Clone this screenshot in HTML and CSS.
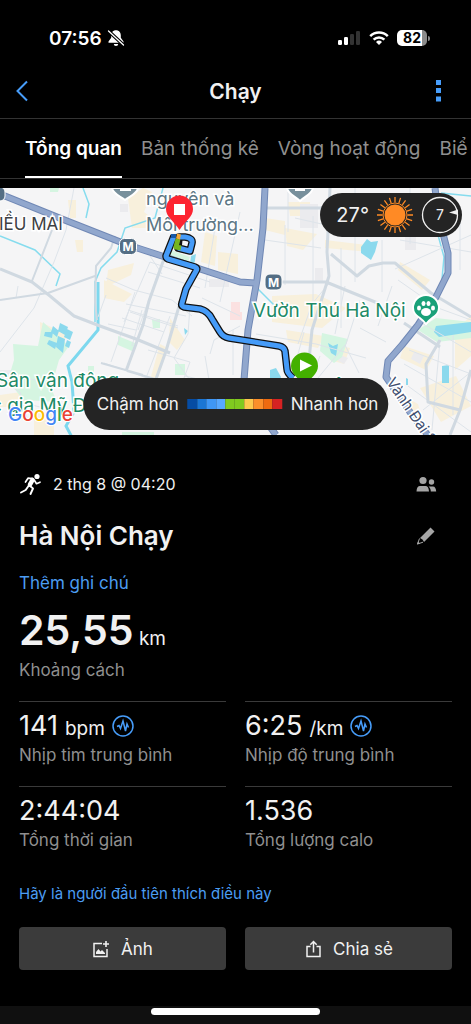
FILE: index.html
```html
<!DOCTYPE html>
<html lang="vi">
<head>
    <meta charset="UTF-8">
    <meta name="viewport" content="width=device-width, initial-scale=1.0">
    <title>Chạy</title>
    <link rel="stylesheet" href="styles.css">
</head>
<body>

<div class="status-bar">
    <div class="status-left">
        <span class="clock">07:56</span>
        <svg width="18" height="18" viewBox="0 0 18 18">
            <path d="M9 1.200c-3 0-4.800 2.300-4.800 5v2.600L1.500 12.600v1.200h15v-1.200l-2.700-3.800V6.200c0-2.700-1.800-5-4.800-5z" fill="#fff"/>
            <path d="M6.800 15h4.400a2.200 2 0 0 1-4.400 0z" fill="#fff"/>
            <path d="M1 1.500L17 16.500" stroke="#000" stroke-width="3.400"/>
            <path d="M1.500 2L16.500 16" stroke="#fff" stroke-width="1.300" stroke-linecap="round"/>
        </svg>
    </div>
    <div class="status-right">
        <svg width="24" height="16" viewBox="0 0 24 16">
            <rect x="1" y="10" width="4" height="5" rx="1.200" fill="#fff"/>
            <rect x="7" y="7" width="4" height="8" rx="1.200" fill="#fff"/>
            <rect x="13" y="4" width="4" height="11" rx="1.200" fill="#333"/>
            <rect x="19" y="1" width="4" height="14" rx="1.200" fill="#333"/>
        </svg>
        <svg width="20" height="16" viewBox="0 0 20 16">
            <g fill="none" stroke="#fff" stroke-width="2.500">
                <path d="M1.200 6.200a12.500 12.500 0 0 1 17.600 0"/>
                <path d="M4.600 9.600a7.700 7.700 0 0 1 10.800 0"/>
            </g>
            <path d="M10 15l-3-3.100a4.300 4.300 0 0 1 6 0z" fill="#fff"/>
        </svg>
        <span class="battery">82</span>
    </div>
</div>

<header class="header">
    <button class="icon-btn" aria-label="Quay lại">
        <svg width="14" height="22" viewBox="0 0 14 22"><path d="M12 1.500L2.500 11l9.500 9.500" fill="none" stroke="#479dfa" stroke-width="2"/></svg>
    </button>
    <h1>Chạy</h1>
    <button class="icon-btn menu" aria-label="Thêm">
        <svg width="14" height="22" viewBox="0 0 14 22"><path d="M5 0h5v5H5zM5 8h5v5H5zM5 16.500h5v5H5z" fill="#479dfa"/></svg>
    </button>
</header>

<nav class="tabs">
    <a class="tab active" href="#">Tổng quan</a>
    <a class="tab" href="#">Bản thống kê</a>
    <a class="tab" href="#">Vòng hoạt động</a>
    <a class="tab" href="#">Biể</a>
</nav>

<section class="map">
    <svg class="map-canvas" viewBox="0 188 471 247" preserveAspectRatio="xMidYMid slice">
        <rect x="0" y="188" width="471" height="247" fill="#f5f5f6"/>

        <!-- built-up areas -->
        <g fill="#f8f0dc">
            <path d="M128 198l15-10 9 4-8 20 8 6-4 10-16 0zM108 270l26-7-3 12-25 12zM104 280l28 14-8 8-20-4zM68 200h8v18h-6zM75 240h8v12h-6zM205 232l12 4-2 30-14-4zM218 252l20 2v20l-20-4z"/>
            <path d="M265 218l20 3v14l-20-5zM285 228l32 6-14 16-16-4zM288 202h22v14h-20zM325 240l50 6-5 6-45-4zM272 296l44-2 30 14-24 20-50-6zM395 200h15v30h-12zM400 262l30 18-8 10-24-20z"/>
            <path d="M40 322l27 12-8 24-18-10zM0 395l28-4v16H0zM34 410l20 4v21H34zM170 318l15 22-8 10-8-8zM160 344l8 4-12 36-6-4zM286 330l38 6-6 12-30-6zM455 330l16-14v40l-16 14zM420 388l36-12 15 30-30 16zM404 346l30 10-8 14-26-12zM396 392l22 12 6 20-20-20zM330 344l20 4-6 16-14-4z"/>
        </g>
        <g fill="#ebebee">
            <path d="M120 204h8v8h-8zM209 279h20v8h-20zM300 204h18v24h-18zM315 268h8v14h-8zM334 206h14v14h-14zM405 234h11v16h-11zM414 352l10 4-4 8-9-5zM340 355l8 3-4 6-6-3zM0 370h12v12H0z"/>
        </g>
        <path d="M231 302h9v12h-9zM230 312h12v8h-12z" fill="#fbe1e1"/>

        <!-- parks and water -->
        <g fill="#d5f5e1">
            <path d="M13 344l25 2 5-24 26 24-10 14-8 28 6 14-34-2-15-20 6-20z"/>
            <path d="M118 336l17 7-3 8-14-6zM152 320l8-1v9h-7zM175 364h10v11h-10zM88 366h6v6h-6zM122 432h32v3h-32zM50 188h9l-1 4h-8zM168 249l22 8-4 10-19-8z"/>
            <path d="M322 333l26 6-6 18-8 6-14-12zM418 330l18-12 35 4v16l-34 4z"/>
        </g>
        <g fill="#8bd9ed">
            <path d="M60 323l8 4-3 8-7-4zM53 326l6 5-2 6-6-5zM45 332l8 0-1 6-8-2zM67 329l6 3-3 8-6-3zM58 336l7 3-2 14-7-6zM49 340l8 3-2 6-8-5zM67 340l4 2-2 6-4-2z"/>
            <path d="M361 247l6-8 4 3 7-1-3 11-4 8-10-7zM270 370l6-2 5 9-3 8h-8zM328 343l5 3 5-2-2 12-5-3zM442 366l7-1v18h-7zM406 378l2 1v6h-2zM184 328l4 3-3 4zM191 256l5-2-2 12-4-2z"/>
            <path d="M436 326l35-4v10l-32 5-5-5z"/>
        </g>
        <g fill="none" stroke="#86dcee" stroke-width="1.500">
            <path d="M83 188l6 16-3 14M0 236l35 14 25 24-4 12M163 188l-8 30-30 10-8 24-16 16-6 14v40M255 286l20 20M441 193l30 3"/>
            <path d="M438 235l6 22-2 22"/>
        </g>
        <path d="M98 282v48l-30 36 4 16 2 30-8 14 8 15" fill="none" stroke="#7dd8ee" stroke-width="3"/>

        <!-- small streets -->
        <g fill="none" stroke="#dee4ea" stroke-width="1">
            <path d="M74 188l-8 42-12 32-20 46-34 44M18 286l-2 12M106 278l28 12 38 10 20 16M106 295l-8 22M104 363l30 10 30 12M135 292l-12 36-12 34M150 256l12 18M150 262l60 20M148 272l52 16M126 304l60 12M122 318l42 14M128 310l50 16M150 262l-26 60M160 268l-22 62M240 212l-20 90M215 228l-10 60M202 298l38 18M190 306l-2 28-14 24 16 22M210 354l4-14 26-14M205 356l4 24M233 330v45"/>
            <path d="M288 192v40M313 216v90M295 218l80 18M265 240l56 8M341 248v80M355 188v94M382 240v52M400 240l71 12M410 188v56M460 210v60M471 235l-76 34M330 282l-18 22-14 40M285 225v60M345 286l-10 48M360 300l-14 44-28 34M256 334l60 10 50 14M304 332l-12 44M320 356l-8 20M345 345l14 28M360 328l26 14M392 286l-14 40M398 280l40 28 33 12M420 322l51 30M409 350l62 24M404 364l67 38M440 340l-8 90M453 335v80M408 386l63 46M471 372l-48 38"/>
            <path d="M130 312l30 10 18 6M108 324l28 6M142 310l-10 36M170 316l-24 62M0 372l44 10M0 380l20 12 8 30M20 402l40 10M185 376l25 6M148 350l42 12-6 16"/>
        </g>

        <!-- secondary roads -->
        <g fill="none" stroke="#d0d9e1" stroke-width="3" stroke-linejoin="round">
            <path d="M0 269l32 13 18 14 24 20 26 10 36 13 34 14"/>
            <path d="M0 300l48-7 47-17M52 230l-20 51M115 236l-4 12-15 18-1 36 2 18" stroke-width="2"/>
            <path d="M165 256l-16 45-6 24-17 46M180 303l-14 48-10 28"/>
            <path d="M101 363l42 12M127 371l28 8" stroke-width="2"/>
            <path d="M265 208h60M330 188l-3 64 2 24-17 54-3 30M272 282h54l54 22M331 254l26 22 12-10 14-3h12l36 30 40 24"/>
            <path d="M404 323l36 24M440 340l-14 24 2 38 32 8 11-40M460 410l-10 25"/>
        </g>

        <!-- highways -->
        <g fill="none" stroke-linejoin="round">
            <g stroke="#7088b5" stroke-width="7">
                <path d="M0 194l62 25 66 26 37 12 32 11 43 14 15 1"/>
                <path d="M265 188l-2 40-6 52-9 50-4 50 8 22 24 33"/>
                <path d="M435 188l4 30 9 35v20l-12 24-18 28-16 20-14 16-2 16 26 38 22 28"/>
            </g>
            <g stroke="#91a7cd" stroke-width="5">
                <path d="M0 194l62 25 66 26 37 12 32 11 43 14 15 1"/>
                <path d="M265 188l-2 40-6 52-9 50-4 50 8 22 24 33"/>
                <path d="M435 188l4 30 9 35v20l-12 24-18 28-16 20-14 16-2 16 26 38 22 28"/>
            </g>
        </g>

        <!-- place names -->
        <g class="place grey">
            <text x="146" y="205">nguyên và</text>
            <text x="146" y="231">Môi trường...</text>
        </g>
        <text class="place district" x="-1" y="230">IỀU MAI</text>
        <g class="place green">
            <text x="253" y="317">Vườn Thú Hà Nội</text>
            <text x="-4" y="387">Sân vận động</text>
            <text x="-9" y="412">c gia Mỹ Đình</text>
            <text x="333" y="392">ô</text>
        </g>
        <text class="place road" transform="translate(386 382) rotate(56)">Vành Đai 2</text>

        <!-- place pins -->
        <g stroke="#fff" stroke-width="2">
            <path d="M112 188c1 6 8 8 13 12 5-4 12-6 13-12z" fill="#78909c"/>
            <path d="M287 188c1 6 8 8 13 13 5-5 12-7 13-13z" fill="#78909c"/>
            <path d="M413 308a13 13 0 1 1 26 0c0 8-8 9-13 16-5-7-13-8-13-16z" fill="#1aa179"/>
        </g>
        <path d="M120 188h11v3h-11zM295 188h10v3h-10z" fill="#fff"/>
        <g fill="#fff">
            <ellipse cx="426" cy="312" rx="5" ry="4"/>
            <ellipse cx="419" cy="308" rx="2" ry="2.500"/>
            <ellipse cx="423.500" cy="303.500" rx="2" ry="2.600"/>
            <ellipse cx="428.500" cy="303.500" rx="2" ry="2.600"/>
            <ellipse cx="433" cy="308" rx="2" ry="2.500"/>
        </g>
        <g fill="#546e84" stroke="#fff" stroke-width="1">
            <rect x="119.500" y="238.500" width="17" height="16" rx="5"/>
            <rect x="265" y="274" width="17" height="16" rx="5"/>
            <rect x="-11" y="187" width="16" height="14" rx="5"/>
        </g>
        <g class="metro">
            <text x="128" y="251">M</text>
            <text x="273.500" y="286.500">M</text>
        </g>

        <!-- route -->
        <g fill="none" stroke-linejoin="round">
            <g stroke="#111" stroke-width="7.500">
                <path d="M174 236l-8 20q0 2 2 3l27 8q3 1 1 4l-10 18-4 14q-1 3 2 4l16 2q8 2 12 10l8 13q3 5 9 6l50 8q5 1 6 5l2 18q0 4 6 9"/>
                <path d="M179 237l6 0q8 1 7 6l-2 8-12-3z"/>
            </g>
            <g stroke="#459bf8" stroke-width="5">
                <path d="M174 236l-8 20q0 2 2 3l27 8q3 1 1 4l-10 18-4 14q-1 3 2 4l16 2q8 2 12 10l8 13q3 5 9 6l50 8q5 1 6 5l2 18q0 4 6 9"/>
                <path d="M179 237l6 0q8 1 7 6l-2 8-12-3"/>
            </g>
            <path d="M178 239l-2 8 5 1" stroke="#76b51f" stroke-width="5"/>
            <path d="M179 234l-1 5" stroke="#f0a83a" stroke-width="4"/>
            <path d="M171 236h5" stroke="#1558a8" stroke-width="4"/>
        </g>
        <path d="M166 209a13.500 13.500 0 0 1 27 0c0 8-7 11-13.500 21-6.500-10-13.500-13-13.500-21z" fill="#fd2431"/>
        <rect x="174" y="204" width="11" height="11" fill="#fff"/>
        <path d="M291 366a13.500 13.500 0 0 1 27 0c0 8-7 11-13.500 21-6.500-10-13.500-13-13.500-21z" fill="#43b000"/>
        <path d="M300 359.500l12 6-12 6z" fill="#fff"/>

        <text class="google" x="8" y="421"><tspan fill="#4285f4">G</tspan><tspan fill="#ea4335">o</tspan><tspan fill="#fbbc05">o</tspan><tspan fill="#4285f4">g</tspan><tspan fill="#34a853">l</tspan><tspan fill="#ea4335">e</tspan></text>
    </svg>

    <div class="weather">
        <span>27°</span>
        <svg width="36" height="36" viewBox="-18 -18 36 36">
            <g stroke="#ff8a25" stroke-width="1.300">
                <path id="ray" d="M0-12.500V-18M0 12.500V18M12.500 0H18M-12.500 0H-18"/>
                <use href="#ray" transform="rotate(18)"/>
                <use href="#ray" transform="rotate(36)"/>
                <use href="#ray" transform="rotate(54)"/>
                <use href="#ray" transform="rotate(72)"/>
            </g>
            <circle r="12" fill="none" stroke="#ff8a25"/>
            <circle r="10.500" fill="#ff8a25"/>
        </svg>
        <svg width="38" height="38" viewBox="-19 -19 38 38">
            <circle r="17.500" fill="none" stroke="#f1f1f1" stroke-width="1.300"/>
            <path d="M9-2.500L18-5.500v5.500z" fill="#f1f1f1"/>
            <text class="wind" x="0" y="5">7</text>
        </svg>
    </div>

    <div class="legend">
        <span>Chậm hơn</span>
        <div class="scale">
            <i class="c1"></i><i class="c2"></i><i class="c3"></i><i class="c4"></i><i class="c5"></i><i class="c5"></i><i class="c6"></i><i class="c7"></i><i class="c8"></i><i class="c9"></i>
        </div>
        <span>Nhanh hơn</span>
    </div>
</section>

<main class="info">
    <div class="row date-row">
        <svg width="24" height="24" viewBox="0 0 24 24">
            <circle cx="18" cy="4.500" r="2.600" fill="#fff"/>
            <g fill="none" stroke="#fff" stroke-linejoin="round" stroke-linecap="round">
                <path d="M13.500 8L11 12.500" stroke-width="4.600"/>
                <path d="M13.500 6.500L9 6.200 6.500 10M15.500 8.500l2 3.200 3.500-1.500" stroke-width="1.700"/>
                <path d="M10.500 13.500l3.500 3-2.500 5.500M9.500 14l-2.800 4-4.700 2.500" stroke-width="1.900"/>
            </g>
        </svg>
        <span class="date">2 thg 8 @ 04:20</span>
        <svg class="end" width="22" height="22" viewBox="0 0 22 22" fill="#a5a5a5">
            <circle cx="8" cy="7.500" r="3.600"/>
            <circle cx="16.500" cy="9" r="2.700"/>
            <path d="M1.500 18.500c.2-3.800 1.500-5.500 3.500-5.500h5.500c2 0 3.300 1.700 3.500 5.500zM13.500 13.500h4.500c2 0 3 2 3.200 5h-5.400c0-2-.7-4-2.300-5z"/>
        </svg>
    </div>
    <div class="row title-row">
        <h2>Hà Nội Chạy</h2>
        <button class="icon-btn end" aria-label="Sửa tên">
            <svg width="22" height="22" viewBox="0 0 22 22" fill="#a5a5a5">
                <path d="M15.500 2.500l4 4L9 17l-1.500-2.500L5 13z"/>
                <path d="M4.500 13.500L2.500 19l5.500-1.800" fill="none" stroke="#a5a5a5"/>
                <path d="M2 19.500l1-3 2 2z"/>
            </svg>
        </button>
    </div>
    <a class="note" href="#">Thêm ghi chú</a>

    <div class="distance"><strong>25,55</strong> km</div>
    <div class="label">Khoảng cách</div>

    <div class="stats">
        <div class="stat">
            <div class="value">141 <small>bpm</small>
                <svg width="22" height="22" viewBox="0 0 22 22" fill="none" stroke="#479dfa"><circle cx="11" cy="11" r="10" stroke-width="1.500"/><path d="M5 11.500l2-1 1.500 3L11 6l2.500 10 1.500-7 1.500 3.500" stroke-width="1.500"/></svg>
            </div>
            <div class="label">Nhịp tim trung bình</div>
        </div>
        <div class="stat">
            <div class="value">6:25 <small>/km</small>
                <svg width="22" height="22" viewBox="0 0 22 22" fill="none" stroke="#479dfa"><circle cx="11" cy="11" r="10" stroke-width="1.500"/><path d="M5 11.500l2-1 1.500 3L11 6l2.500 10 1.500-7 1.500 3.500" stroke-width="1.500"/></svg>
            </div>
            <div class="label">Nhịp độ trung bình</div>
        </div>
        <div class="stat">
            <div class="value">2:44:04</div>
            <div class="label">Tổng thời gian</div>
        </div>
        <div class="stat">
            <div class="value">1.536</div>
            <div class="label">Tổng lượng calo</div>
        </div>
    </div>

    <a class="like" href="#">Hãy là người đầu tiên thích điều này</a>

    <div class="actions">
        <button class="action">
            <svg width="18" height="18" viewBox="0 0 18 18">
                <path d="M10 3.500H2v13h13V9" fill="none" stroke="#f1f1f1" stroke-width="1.500"/>
                <path d="M14 1v6M11 4h6" stroke="#f1f1f1" stroke-width="1.600"/>
                <path d="M4 14v-2l2.500-3 2 2.500 1.500-1.500 3 3v1z" fill="#f1f1f1"/>
            </svg>
            Ảnh
        </button>
        <button class="action">
            <svg width="18" height="18" viewBox="0 0 18 18" fill="none" stroke="#f1f1f1" stroke-width="1.500">
                <path d="M6.500 6.500H3v10h13v-10h-3.500M9.500 12.500V2M6.300 4.800L9.500 1.500l3.200 3.300"/>
            </svg>
            Chia sẻ
        </button>
    </div>
</main>

<div class="home-bar"><div class="handle"></div></div>

</body>
</html>
```
FILE: styles.css
```css
* {
    box-sizing: border-box;
}
body {
    margin: 0;
    min-height: 100vh;
    display: flex;
    flex-direction: column;
    background: #000;
    color: #f1f1f1;
    font-family: Inter, "Liberation Sans", sans-serif;
    font-size: 17px;
    overflow-x: hidden;
}
svg {
    display: block;
    flex: none;
}
a {
    text-decoration: none;
}
.icon-btn {
    display: block;
    padding: 0;
    border: none;
    background: none;
    cursor: pointer;
}

/* status bar */
.status-bar {
    display: flex;
    justify-content: space-between;
    align-items: center;
    height: 64px;
    padding: 12px 44px 0 49px;
    color: #fff;
}
.status-left, .status-right {
    display: flex;
    align-items: center;
}
.status-left {
    gap: 5px;
}
.status-right {
    gap: 8px;
}
.clock {
    font-size: 19px;
    font-weight: 600;
}
.battery {
    position: relative;
    width: 30px;
    height: 16px;
    border-radius: 5px;
    background: linear-gradient(to right, #fff 82%, #8b8b8b 82%);
    color: #000;
    font-size: 14px;
    font-weight: 700;
    line-height: 16px;
    text-align: center;
}
.battery::after {
    content: "";
    position: absolute;
    right: -3px;
    top: 6px;
    width: 2px;
    height: 5px;
    border-radius: 0 2px 2px 0;
    background: #8b8b8b;
}

/* header */
.header {
    display: grid;
    grid-template-columns: 1fr auto 1fr;
    align-items: center;
    height: 54px;
    padding: 0 15px;
}
.header h1 {
    margin: 0;
    font-size: 21px;
    font-weight: 600;
}
.menu {
    justify-self: end;
    margin-right: 11px;
}
.tabs {
    display: flex;
    gap: 19px;
    height: 61px;
    padding: 0 25px;
    border-top: 1px solid #333;
    border-bottom: 1px solid #333;
    overflow: hidden;
    white-space: nowrap;
}
.tab {
    flex: none;
    padding-top: 18px;
    color: #8f8f8f;
    font-size: 19px;
    line-height: 24px;
}
.tab.active {
    border-bottom: 2px solid #fff;
    color: #fff;
    font-weight: 600;
}

/* map */
.map {
    position: relative;
    height: 247px;
    margin-top: 9px;
    overflow: hidden;
}
.map-canvas {
    width: 100%;
    height: 100%;
}
.place {
    paint-order: stroke;
    stroke: #fff;
    stroke-width: 3px;
}
.grey {
    font-size: 18px;
    fill: #5c7684;
}
.green {
    font-size: 19px;
    fill: #1d8a66;
}
.district {
    font-size: 17px;
    fill: #3c4043;
}
.road {
    font-size: 15px;
    fill: #3d4d6e;
}
.metro {
    font-size: 12px;
    font-weight: 700;
    fill: #fff;
    text-anchor: middle;
}
.google {
    font-size: 19px;
    font-weight: 500;
    paint-order: stroke;
    stroke: #fff;
    stroke-width: 2px;
}
.wind {
    font-size: 14px;
    fill: #f1f1f1;
    text-anchor: middle;
}
.weather, .legend {
    position: absolute;
    display: flex;
    align-items: center;
    background: #242424;
}
.weather {
    top: 5px;
    right: 9px;
    gap: 8px;
    height: 44px;
    padding: 0 3px 0 16px;
    border-radius: 22px;
    font-size: 20px;
}
.legend {
    left: 50%;
    bottom: 5px;
    gap: 9px;
    height: 52px;
    padding: 0 10px 0 14px;
    border-radius: 26px;
    transform: translateX(-50%);
    white-space: nowrap;
}
.scale {
    display: flex;
    width: 94px;
}
.scale i {
    flex: 1;
    height: 10px;
}
.c1 { background: #064ca3; }
.c2 { background: #1b76d4; }
.c3 { background: #3f97f5; }
.c4 { background: #57a8ff; }
.c5 { background: #80c91f; }
.c6 { background: #fdc94d; }
.c7 { background: #fb8f2a; }
.c8 { background: #ed6a10; }
.c9 { background: #d62222; }

/* activity info */
.info {
    padding: 37px 19px 0;
}
.row {
    display: flex;
    align-items: center;
}
.end {
    margin-left: auto;
    margin-right: 15px;
}
.date-row {
    gap: 10px;
    height: 24px;
}
.date {
    font-size: 16px;
}
.title-row {
    height: 32px;
    margin-top: 24px;
}
.title-row h2 {
    margin: 0;
    font-size: 26px;
    font-weight: 600;
    line-height: 32px;
}
.note, .like {
    display: block;
    color: #4c9df2;
    line-height: 22px;
}
.note {
    margin-top: 20px;
    font-size: 17px;
}
.distance {
    height: 54px;
    margin-top: 10px;
    font-size: 19px;
    line-height: 52px;
}
.distance strong {
    font-size: 41px;
    font-weight: 600;
}
.label {
    color: #8f8f8f;
    font-size: 17px;
    line-height: 24px;
}
.stats {
    display: grid;
    grid-template-columns: 1fr 1fr;
    column-gap: 19px;
    margin-top: 19px;
}
.stat {
    height: 85px;
    padding-top: 7px;
    border-top: 1px solid #3a3a3a;
}
.value {
    display: flex;
    align-items: baseline;
    gap: 7px;
    height: 34px;
    font-size: 27px;
    line-height: 34px;
}
.value small {
    font-size: 19px;
}
.value svg {
    align-self: center;
}
.like {
    margin-top: 12px;
    font-size: 15px;
}
.actions {
    display: grid;
    grid-template-columns: 1fr 1fr;
    gap: 19px;
    margin-top: 22px;
}
.action {
    display: flex;
    justify-content: center;
    align-items: center;
    gap: 11px;
    height: 43px;
    border: none;
    border-radius: 4px;
    background: #3b3b3b;
    color: #f1f1f1;
    font-family: inherit;
    font-size: 17px;
    cursor: pointer;
}

.home-bar {
    height: 18px;
    margin-top: auto;
    padding-top: 2px;
    background: #101010;
}
.handle {
    width: 36%;
    height: 7px;
    margin: 0 auto;
    border-radius: 4px;
    background: #fff;
}
```
